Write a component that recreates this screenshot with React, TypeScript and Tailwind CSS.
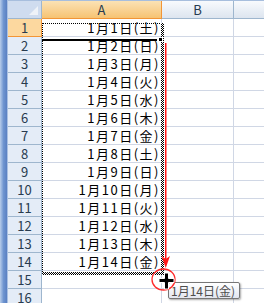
import React from 'react';

const DAYS = ['土', '日', '月', '火', '水', '木', '金'];

const rows = Array.from({ length: 16 }, (_, i) => {
  const n = i + 1;
  return {
    n,
    text: n <= 14 ? `1月${n}日(${DAYS[(n - 1) % 7]})` : '',
  };
});

const App: React.FC = () => {
  return (
    <div className="relative w-[264px] h-[303px] overflow-hidden bg-white flex font-['Noto_Sans_CJK_JP',sans-serif]">
      {/* Window edge on the left */}
      <div className="w-[8px] h-full shrink-0 bg-gradient-to-r from-[#b8cdea] via-[#6f95d0] to-[#5a80c2] border-r border-[#a9c0e2]" />

      <div className="flex-1 flex flex-col">
        {/* Strip above the headers */}
        <div className="h-[5px] bg-[#dbe6f4] border-b border-[#a7bedd]" />

        {/* Column headers */}
        <div className="flex h-[18px]">
          <div className="relative w-[34px] shrink-0 bg-[#cfdcef] border-r border-b border-[#9eb6ce]">
            <svg className="absolute right-[3px] bottom-[3px]" width="9" height="9" viewBox="0 0 9 9">
              <polygon points="9,0 9,9 0,9" fill="#eef2f8" />
            </svg>
          </div>
          <div className="w-[120px] shrink-0 bg-gradient-to-b from-[#fbe2b4] to-[#f6c372] border-r border-b border-[#f29536] flex items-center justify-center text-[13px] text-[#283b4f]">
            A
          </div>
          <div className="w-[72px] shrink-0 bg-gradient-to-b from-[#f8fafd] to-[#dde5ef] border-r border-b border-[#9eb6ce] flex items-center justify-center text-[13px] text-[#283b4f]">
            B
          </div>
          <div className="flex-1 bg-gradient-to-b from-[#f8fafd] to-[#dde5ef] border-b border-[#9eb6ce]" />
        </div>

        {/* Rows */}
        {rows.map((row) => (
          <div key={row.n} className="flex h-[18px] shrink-0">
            <div
              className={`w-[34px] shrink-0 border-r border-b flex items-center justify-center text-[13px] ${
                row.n === 1
                  ? 'bg-[#fcd89f] border-[#f29536] text-[#283b4f]'
                  : 'bg-[#e4ecf7] border-[#9eb6ce] text-[#283b4f]'
              }`}
            >
              {row.n}
            </div>
            <div className="w-[120px] shrink-0 border-r border-b border-[#d0d7e5] flex items-center justify-end pr-[1px] text-[13px] tracking-[1.5px] text-black whitespace-nowrap">
              {row.text}
            </div>
            <div className="w-[72px] shrink-0 border-r border-b border-[#d0d7e5]" />
            <div className="flex-1 border-b border-[#d0d7e5]" />
          </div>
        ))}
      </div>

      {/* Fill selection outline over A1:A14 */}
      <div className="absolute left-[42px] top-[23px] w-[120px] h-[251px] border-l border-t border-dotted border-black" />
      <div className="absolute left-[161px] top-[23px] w-[3px] h-[252px] bg-[repeating-conic-gradient(#000_0_25%,#fff_0_50%)] bg-[length:2px_2px]" />
      <div className="absolute left-[42px] top-[272px] w-[122px] h-[3px] bg-[repeating-conic-gradient(#000_0_25%,#fff_0_50%)] bg-[length:2px_2px]" />

      {/* Active cell bottom edge with fill handle */}
      <div className="absolute left-[42px] top-[39px] w-[115px] h-[2px] bg-black" />
      <div className="absolute left-[158px] top-[37px] w-[5px] h-[5px] bg-black border border-white" />

      {/* Tooltip */}
      <div className="absolute left-[168px] top-[282px] w-[72px] h-[17px] rounded-[2px] border border-[#767676] bg-gradient-to-b from-white to-[#e3e6ef] shadow-[1px_1px_2px_rgba(0,0,0,0.35)] pl-[2px] text-[12px] leading-[15px] text-[#4d4d4d] whitespace-nowrap">
        1月14日(金)
      </div>

      {/* Red arrow, circle and drag cursor */}
      <svg className="absolute left-0 top-0 pointer-events-none" width="264" height="303" viewBox="0 0 264 303">
        <line x1="165.75" y1="43" x2="165.75" y2="260" stroke="#ff1a1a" strokeWidth="1.5" />
        <polygon points="161.5,256 165.75,259 170,256 165.75,268" fill="#ff1a1a" />
        <ellipse cx="163.5" cy="279.5" rx="11.5" ry="10.5" fill="none" stroke="#ff2a2a" strokeWidth="1.3" />
        <path
          d="M164.5 273 H168.5 V278.5 H174 V282.5 H168.5 V289 H164.5 V282.5 H159 V278.5 H164.5 Z"
          fill="#000"
          stroke="#fff"
          strokeWidth="1"
        />
      </svg>
    </div>
  );
};

export default App;
